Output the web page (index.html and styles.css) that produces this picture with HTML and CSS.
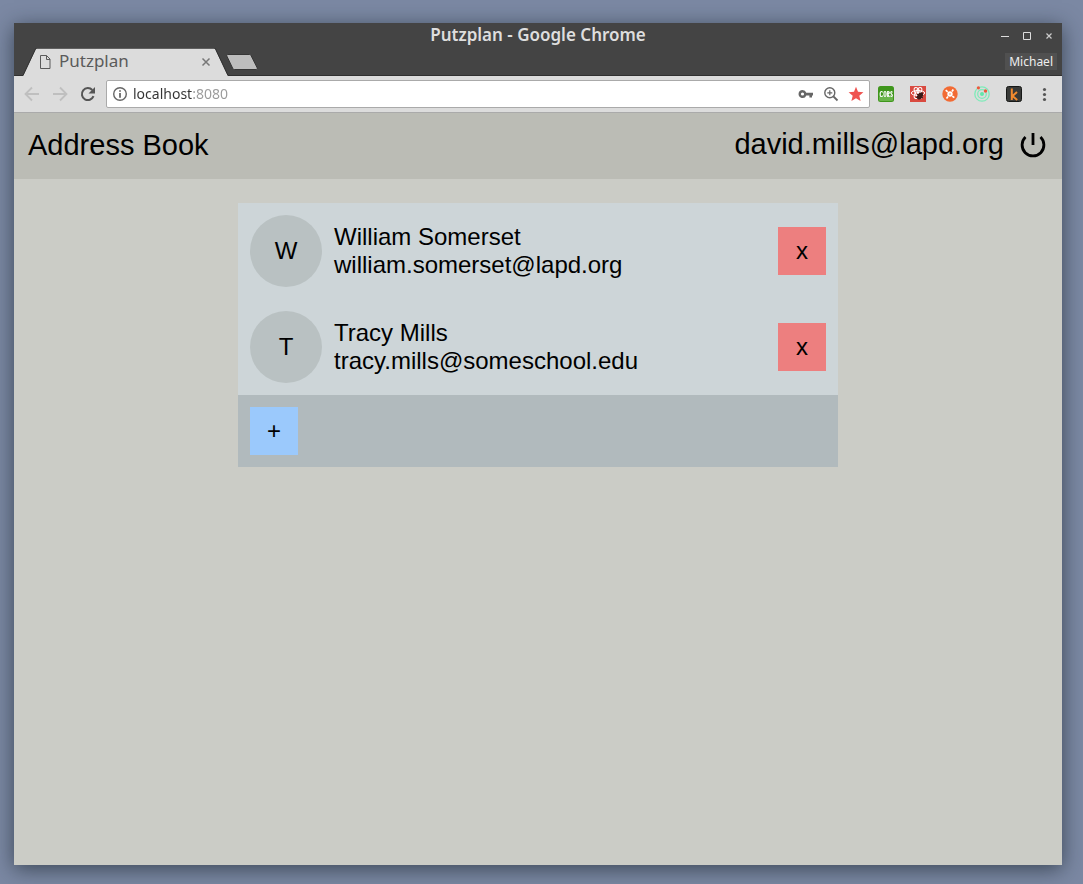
FILE: index.html
```html
<!DOCTYPE html>
<html lang="en">
<head>
<meta charset="utf-8">
<title>Putzplan</title>
<link rel="stylesheet" href="styles.css">
</head>
<body>
<div class="window">
  <header class="titlebar">
    <span class="titlebar-text">Putzplan - Google Chrome</span>
    <div class="window-controls">
      <button type="button" aria-label="Minimize"><svg width="10" height="10" viewBox="0 0 10 10"><path d="M1 5.5h8" stroke="#ddd"/></svg></button>
      <button type="button" aria-label="Maximize"><svg width="10" height="10" viewBox="0 0 10 10"><path d="M1.5 1.5h7v7h-7z" fill="none" stroke="#ddd"/></svg></button>
      <button type="button" aria-label="Close window"><svg width="10" height="10" viewBox="0 0 10 10"><path d="M2.5 2.5l5 5M7.500 2.500l-5 5" stroke="#ccc" stroke-width="1.200"/></svg></button>
    </div>
  </header>

  <nav class="tabstrip" aria-label="Tabs">
    <div class="tab">
      <svg class="tab-shape" width="206" height="28" viewBox="0 0 206 28" aria-hidden="true"><path d="M0 28L12.500 1.500Q13 .5 14 .5H191Q192 .5 192.500 1.500L205 28Z" fill="#dcdcdc"/><path d="M0 27.500L12.500 1Q13 0 14 0H191Q192 0 192.500 1L205 27.500" fill="none" stroke="#303030"/></svg>
      <svg class="tab-page" width="12" height="14" viewBox="0 0 12 14" aria-hidden="true"><path d="M1.500 .5h6l3.500 3.500v9.500h-9.500zM7.500 .5v4h3.500" fill="none" stroke="#5a5a5a"/></svg>
      <span class="tab-title">Putzplan</span>
      <button type="button" aria-label="Close tab"><svg width="10" height="10" viewBox="0 0 10 10"><path d="M1.500 1.500l7 7M8.500 1.500l-7 7" stroke="#777" stroke-width="1.500"/></svg></button>
    </div>
    <button class="new-tab" type="button" aria-label="New tab"><svg width="34" height="18" viewBox="0 0 34 18"><path d="M1.500 1.500h22q1 0 1.500 1l6.300 12.500q.5 1.500-1 1.500H8.500q-1.200 0-1.700-1L.8 3Q.3 1.500 1.500 1.500z" fill="#bdbdbd" stroke="#363636"/></svg></button>
    <button class="profile" type="button">Michael</button>
  </nav>

  <div class="toolbar">
    <div class="history">
      <button type="button" aria-label="Back"><svg width="16" height="16" viewBox="0 0 16 16"><path d="M15 8H2M8 1.500L1.500 8 8 14.500" fill="none" stroke="#bfbfbf" stroke-width="1.800"/></svg></button>
      <button type="button" aria-label="Forward"><svg width="16" height="16" viewBox="0 0 16 16"><path d="M1 8h13M8 1.500L14.500 8 8 14.500" fill="none" stroke="#bfbfbf" stroke-width="1.800"/></svg></button>
      <button type="button" aria-label="Reload"><svg width="16" height="16" viewBox="0 0 16 16"><path d="M13.500 10.200A6 6 0 1 1 12.300 4" fill="none" stroke="#555" stroke-width="2"/><path d="M15 1v6.500H8.500z" fill="#555"/></svg></button>
    </div>
    <div class="omnibox">
      <svg width="16" height="16" viewBox="0 0 16 16" aria-hidden="true"><circle cx="8" cy="8" r="6.300" fill="none" stroke="#666" stroke-width="1.400"/><path d="M7.200 4.300h1.600v1.500H7.200zM7.200 7h1.600v4.700H7.200z" fill="#555"/></svg>
      <input class="address" type="text" aria-label="Address" value="localhost:8080" spellcheck="false">
      <svg width="16" height="16" viewBox="0 0 16 16" aria-hidden="true"><path fill-rule="evenodd" d="M4.500 4a4 4 0 0 1 3.800 2.700H15v2.700h-1v2.100h-2.600V9.400H8.300A4 4 0 1 1 4.500 4zm0 2.400a1.600 1.600 0 1 0 0 3.200 1.600 1.600 0 0 0 0-3.200z" fill="#666"/></svg>
      <svg width="16" height="16" viewBox="0 0 16 16" aria-hidden="true"><circle cx="6.800" cy="6.800" r="5" fill="none" stroke="#666" stroke-width="1.400"/><path d="M4.300 6.800h5M6.800 4.300v5" stroke="#666" stroke-width="1.200"/><path d="M10.500 10.500l4 4" stroke="#666" stroke-width="1.800"/></svg>
      <svg width="16" height="16" viewBox="0 0 16 16" aria-hidden="true"><path d="M8 .8l2 5 5.400.4-4.100 3.500 1.300 5.300L8 12.200 3.400 15l1.300-5.300L.6 6.200 6 5.800z" fill="#ef5350"/></svg>
    </div>
    <div class="extensions">
      <svg width="16" height="16" viewBox="0 0 16 16" role="img" aria-label="CORS"><rect width="16" height="16" rx="2.500" fill="#3f961c"/><path d="M1 10.500h14v3q0 1.500-1.500 1.500h-11Q1 15 1 13.500z" fill="#69b54a"/><g fill="none" stroke="#fff" stroke-width="1.200"><path d="M4.500 6.500Q4.300 5.500 3.400 5.500T2.200 7v2.200q0 1.300 1.200 1.300t1.200-1M6 7q0-1.500 1-1.500T8 7v2q0 1.500-1 1.500T6 9zM9.700 11V5.500h.6q1 0 1 1.200T9.800 8l1.600 3M14.200 6.500q0-1-.7-1t-.7 1 .7 1.500.8 1.500-.8 1-.8-1"/></g></svg>
      <svg width="16" height="16" viewBox="0 0 16 16" aria-hidden="true"><rect width="16" height="16" fill="#d94a40"/><g fill="none" stroke="#fff"><ellipse cx="8" cy="7" rx="6.700" ry="2.500"/><ellipse cx="8" cy="7" rx="6" ry="2.500" transform="rotate(60 8 7)"/><ellipse cx="8" cy="7" rx="6" ry="2.500" transform="rotate(120 8 7)"/></g><circle cx="8" cy="6.500" r="1.500" fill="#fff"/><ellipse cx="10" cy="10" rx="2.600" ry="3.600" transform="rotate(35 10 10)" fill="#3a1916"/><path d="M7 8l6 4M11.500 6l1.500 2M6 11l3 2" stroke="#3a1916"/></svg>
      <svg width="16" height="16" viewBox="0 0 16 16" aria-hidden="true"><circle cx="8" cy="8" r="7.700" fill="#f26b34"/><circle cx="8" cy="8" r="2.700" fill="#fff"/><path d="M3.700 4.200l2 1.600M11.300 3.500l-1.300 2M4.500 12.500l1.500-2M12.300 11.700l-2-1.600" stroke="#fff" stroke-width="1.700"/><circle cx="8" cy="8" r="1" fill="#f8b89b"/></svg>
      <svg width="16" height="16" viewBox="0 0 16 16" aria-hidden="true"><g fill="none" stroke="#7eebb9" stroke-width="1.300"><circle cx="8" cy="8" r="7.200"/><circle cx="8" cy="8" r="4.300"/></g><circle cx="8" cy="8" r="2" fill="#63e6aa"/><circle cx="4.400" cy="1.800" r="1.600" fill="#ee583c"/><circle cx="11.500" cy="5" r="1.700" fill="#ee583c"/></svg>
      <svg width="16" height="16" viewBox="0 0 16 16" aria-hidden="true"><rect x=".5" y=".5" width="15" height="15" rx="2" fill="#393a38" stroke="#171817"/><path d="M5.800 2.500v11.500M11 6l-4.500 4 4.700 4" fill="none" stroke="#f28a2e" stroke-width="2"/></svg>
    </div>
    <button class="menu" type="button" aria-label="Menu"><svg width="16" height="16" viewBox="0 0 16 16"><g fill="#555"><circle cx="8.500" cy="3.500" r="1.600"/><circle cx="8.500" cy="8.500" r="1.600"/><circle cx="8.500" cy="13.500" r="1.600"/></g></svg></button>
  </div>

  <div class="page">
    <header class="app-header">
      <h1>Address Book</h1>
      <div class="account">
        <span>david.mills@lapd.org</span>
        <button type="button" aria-label="Log out"><svg width="26" height="26" viewBox="0 0 26 26"><path d="M13 1v12M5.500 5.100A10.900 10.900 0 1 0 20.500 5.100" fill="none" stroke="#000" stroke-width="2.800"/></svg></button>
      </div>
    </header>
    <main class="card">
      <ul class="contacts">
        <li class="contact">
          <span class="avatar">W</span>
          <div class="details"><div>William Somerset</div><div>william.somerset@lapd.org</div></div>
          <button class="square remove" type="button" aria-label="Remove William Somerset">x</button>
        </li>
        <li class="contact">
          <span class="avatar">T</span>
          <div class="details"><div>Tracy Mills</div><div>tracy.mills@someschool.edu</div></div>
          <button class="square remove" type="button" aria-label="Remove Tracy Mills">x</button>
        </li>
      </ul>
      <div class="card-footer"><button class="square add" type="button" aria-label="Add contact">+</button></div>
    </main>
  </div>
</div>
</body>
</html>
```
FILE: styles.css
```css
* { box-sizing: border-box; }

body {
  margin: 0;
  min-height: 100vh;
  padding: 23px 21px 19px 14px;
  display: flex;
  background: #7b88a3;
  font-family: "Liberation Sans", Arial, sans-serif;
}

button {
  margin: 0;
  padding: 0;
  border: 0;
  background: none;
  color: inherit;
  font: inherit;
  display: flex;
  align-items: center;
  justify-content: center;
}

svg { display: block; flex: none; }

.window {
  flex: 1;
  min-width: 0;
  display: flex;
  flex-direction: column;
  background: #444;
  box-shadow: 0 4px 20px rgba(25, 35, 45, 0.65);
}

.titlebar,
.tabstrip,
.toolbar { font-family: "Noto Sans", "Open Sans", sans-serif; }

.titlebar {
  height: 25px;
  display: grid;
  grid-template-columns: 1fr auto 1fr;
  align-items: center;
  color: #dedede;
}

.titlebar-text {
  grid-column: 2;
  padding-bottom: 2px;
  font-size: 17px;
  line-height: 22px;
  font-weight: 600;
}

.window-controls {
  display: flex;
  justify-content: flex-end;
  gap: 12px;
  padding-right: 8px;
}

.tabstrip {
  height: 28px;
  display: flex;
  align-items: center;
  padding: 0 5px 0 9px;
  border-bottom: 1px solid #303030;
}

.tab {
  position: relative;
  width: 203px;
  height: 28px;
  display: flex;
  align-items: center;
  padding: 0 15px 0 16px;
  gap: 8px;
  color: #5a5a5a;
  font-size: 17px;
  line-height: 24px;
}

.tab-shape { position: absolute; left: 0; top: 0; }
.tab-page, .tab-title, .tab button { position: relative; }
.tab-title { flex: 1; padding-bottom: 2px; }

.profile {
  margin-left: auto;
  padding: 0 4px;
  background: #505050;
  color: #eee;
  font-size: 12px;
  line-height: 17px;
}

.toolbar {
  height: 37px;
  display: flex;
  align-items: center;
  padding: 0 10px;
  background: #dcdcdc;
  border-bottom: 1px solid #aaa;
}

.history { display: flex; gap: 12px; }

.omnibox {
  flex: 1;
  min-width: 0;
  height: 28px;
  margin: 0 8px 0 10px;
  padding: 0 5px;
  display: flex;
  align-items: center;
  gap: 9px;
  background: #fff;
  border: 1px solid #aaa;
  border-radius: 2px;
}

.address {
  flex: 1;
  min-width: 0;
  margin-left: -4px;
  padding: 0;
  border: 0;
  outline: 0;
  font: 14px/20px "Noto Sans", "Open Sans", sans-serif;
  color: transparent;
  background: linear-gradient(90deg, #333 59px, #999 59px);
  background-clip: text;
  -webkit-background-clip: text;
}

.extensions { display: flex; gap: 16px; }
.menu { margin-left: 14px; }

.page {
  flex: 1;
  background: #cbccc6;
  color: #000;
}

.app-header {
  display: flex;
  align-items: center;
  justify-content: space-between;
  padding: 16px 16px 18px 14px;
  background: #bbbcb5;
  font-size: 29px;
  line-height: 32px;
}

.app-header h1 { margin: 0; font: inherit; }
.account { display: flex; align-items: center; gap: 16px; }
.account span { padding-bottom: 2px; line-height: 30px; }

.card {
  max-width: 600px;
  margin: 24px auto;
  font-size: 24px;
  line-height: 28px;
}

.contacts {
  margin: 0;
  padding: 0;
  list-style: none;
  background: #cdd5d8;
}

.contact {
  display: flex;
  align-items: center;
  gap: 12px;
  padding: 12px;
}

.avatar {
  width: 72px;
  height: 72px;
  border-radius: 50%;
  display: flex;
  align-items: center;
  justify-content: center;
  background: #b9c1c2;
}

.details { flex: 1; min-width: 0; }

.square { width: 48px; height: 48px; }
.remove { background: #ed7f7f; }
.add { background: #9bc9fc; }

.card-footer { padding: 12px; background: #b1babd; }
```
